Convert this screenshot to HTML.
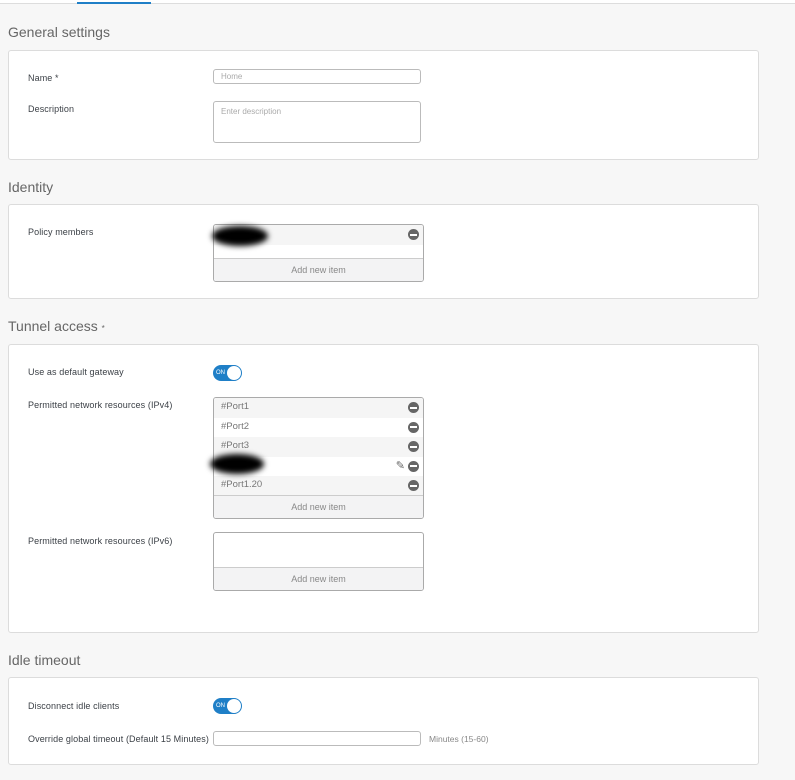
<!DOCTYPE html><html><head><style>
body{margin:0;width:795px;height:780px;background:#f7f7f7;font-family:"Liberation Sans",sans-serif;position:relative;overflow:hidden}
.a{position:absolute}
.h{font-size:14px;color:#666;left:8px}
.p{background:#fff;border:1px solid #dcdcdc;border-radius:3px;left:8px;width:749px}
.l{font-size:9px;color:#3a3f45;left:28px;letter-spacing:0.1px}
.in{border:1px solid #bbb;border-radius:3px;background:#fff;left:213px;width:208px;font-size:8px;color:#aaa;box-sizing:border-box;padding:2px 7px}
.list{border:1px solid #aaa;border-radius:3px;background:#fff;left:213px;width:211px;box-sizing:border-box;overflow:hidden}
.row{height:19.6px;font-size:9.5px;color:#777;padding-left:7px;line-height:17px;position:relative}
.g{background:#f5f5f5}
.m{position:absolute;right:4px;top:4px;width:11px;height:11px;border-radius:50%;background:#666}
.m:after{content:"";position:absolute;left:2px;top:4.5px;width:7px;height:2px;background:#fff}
.add{background:#f3f3f4;border-top:1px solid #ccc;text-align:center;font-size:9px;color:#888;position:absolute;left:0;right:0;bottom:0;height:22px;line-height:22px}
.tg{left:213px;width:29px;height:16px;border-radius:8px;background:#1f7fc7}
.tg span{position:absolute;left:3px;top:5px;font-size:6px;line-height:6px;color:#fff}
.tg:after{content:"";position:absolute;right:1px;top:1px;width:14px;height:14px;border-radius:50%;background:#fff}
.blob{background:#000;border-radius:50%;filter:blur(3px)}
</style></head><body>
<div class="a" style="left:0;top:0;width:795px;height:3px;background:#fff;border-bottom:1px solid #ddd"></div>
<div class="a" style="left:77px;top:2px;width:74px;height:2px;background:#1f7fc7"></div>

<div class="a h" style="top:24px">General settings</div>
<div class="a p" style="top:50px;height:108px"></div>
<div class="a l" style="top:73px">Name *</div>
<div class="a in" style="top:69px;height:15px">Home</div>
<div class="a l" style="top:104px">Description</div>
<div class="a in" style="top:101px;height:42px;padding-top:5px">Enter description</div>

<div class="a h" style="top:179px">Identity</div>
<div class="a p" style="top:204px;height:93px"></div>
<div class="a l" style="top:227px">Policy members</div>
<div class="a list" style="top:224px;height:58px"><div class="row g"><div class="m"></div></div><div class="add">Add new item</div></div>
<div class="a blob" style="left:212px;top:226px;width:56px;height:20px"></div>

<div class="a h" style="top:318px">Tunnel access <span style="font-size:8px">*</span></div>
<div class="a p" style="top:344px;height:287px"></div>
<div class="a l" style="top:367px">Use as default gateway</div>
<div class="a tg" style="top:365px"><span>ON</span></div>
<div class="a l" style="top:400px">Permitted network resources (IPv4)</div>
<div class="a list" style="top:397px;height:122px">
<div class="row g">#Port1<div class="m"></div></div>
<div class="row">#Port2<div class="m"></div></div>
<div class="row g">#Port3<div class="m"></div></div>
<div class="row"><span style="position:absolute;right:18px;top:1px;color:#666;font-size:11px">✎</span><div class="m"></div></div>
<div class="row g">#Port1.20<div class="m"></div></div>
<div class="add">Add new item</div></div>
<div class="a blob" style="left:210px;top:454px;width:54px;height:20px"></div>
<div class="a l" style="top:536px">Permitted network resources (IPv6)</div>
<div class="a list" style="top:532px;height:59px"><div class="add">Add new item</div></div>

<div class="a h" style="top:652px">Idle timeout</div>
<div class="a p" style="top:677px;height:86px"></div>
<div class="a l" style="top:701px">Disconnect idle clients</div>
<div class="a tg" style="top:698px"><span>ON</span></div>
<div class="a l" style="top:734px">Override global timeout (Default 15 Minutes)</div>
<div class="a in" style="top:731px;height:15px"></div>
<div class="a" style="left:429px;top:734px;font-size:8.5px;color:#888">Minutes (15-60)</div>
</body></html>
